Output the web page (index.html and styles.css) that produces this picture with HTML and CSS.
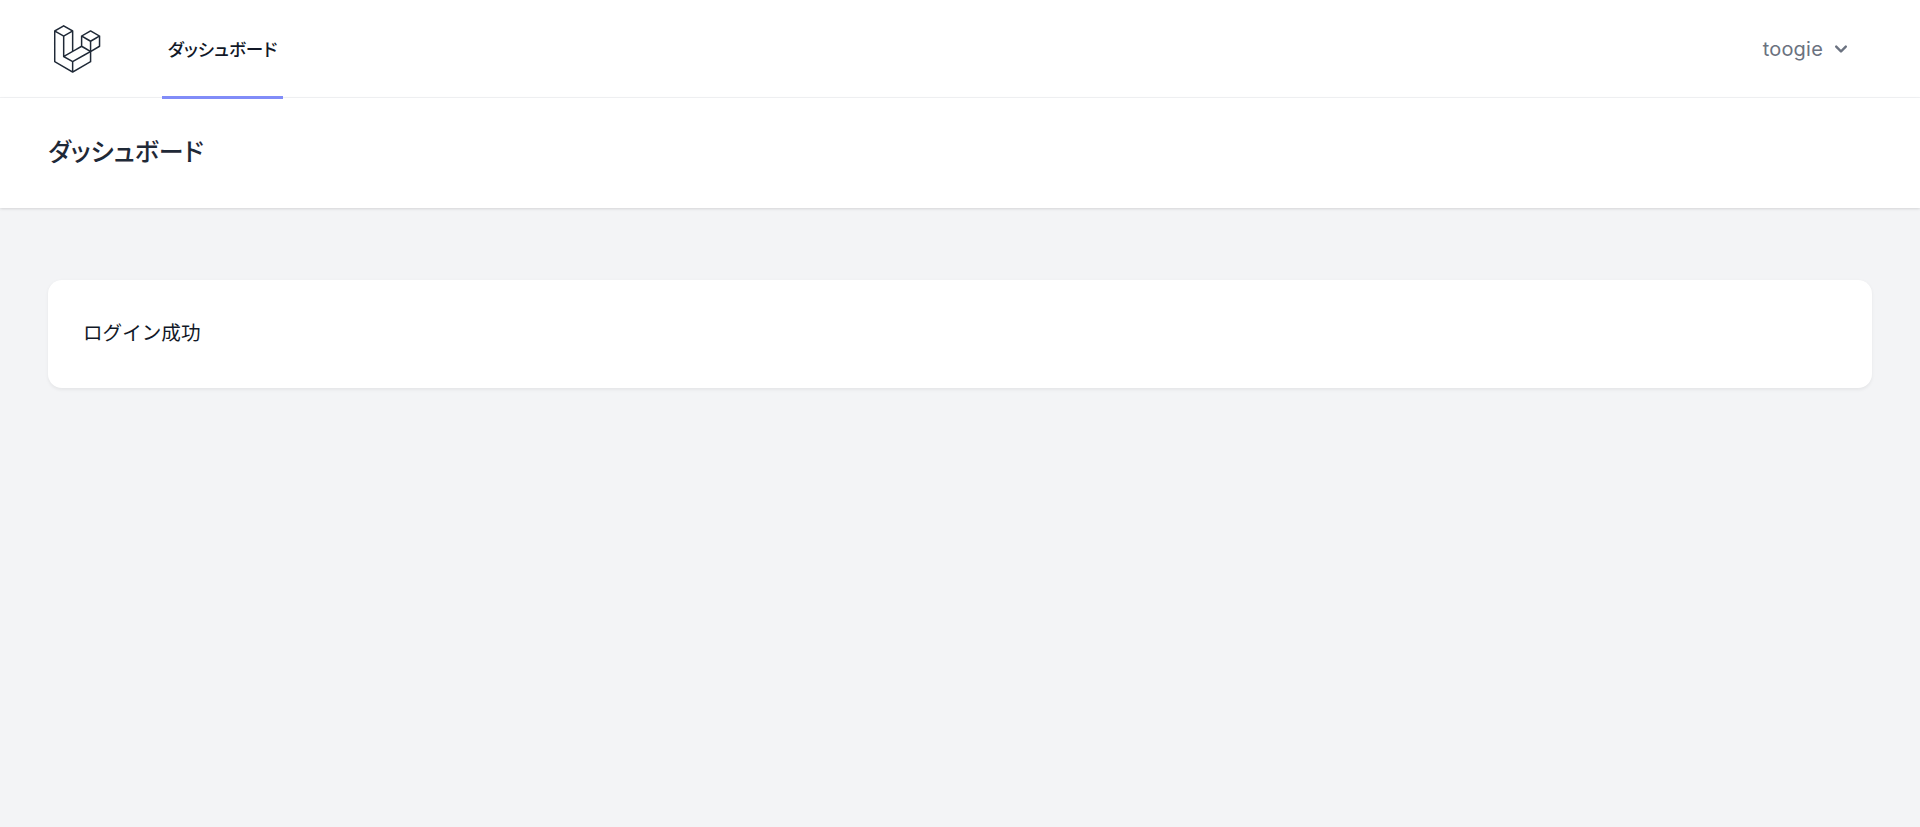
FILE: index.html
```html
<!DOCTYPE html>
<html lang="ja">
<head>
    <meta charset="UTF-8">
    <meta name="viewport" content="width=device-width, initial-scale=1.0">
    <title>ダッシュボード</title>
    <link rel="stylesheet" href="styles.css">
</head>
<body>
    <nav class="navbar">
        <div class="nav-left">
            <a href="#" class="logo">
                <svg class="logo-icon" viewBox="0 0 316 316" xmlns="http://www.w3.org/2000/svg">
                    <path d="M305.8 81.125C305.77 80.995 305.69 80.885 305.65 80.755C305.56 80.525 305.49 80.285 305.37 80.075C305.29 79.935 305.17 79.815 305.07 79.685C304.94 79.515 304.83 79.325 304.68 79.175C304.55 79.045 304.39 78.955 304.25 78.845C304.09 78.715 303.95 78.575 303.77 78.475L251.32 48.275C249.97 47.495 248.31 47.495 246.96 48.275L194.51 78.475C194.33 78.575 194.19 78.725 194.03 78.845C193.89 78.955 193.73 79.045 193.6 79.175C193.45 79.325 193.34 79.515 193.21 79.685C193.11 79.815 192.99 79.935 192.91 80.075C192.79 80.285 192.71 80.525 192.63 80.755C192.58 80.875 192.51 80.995 192.48 81.125C192.38 81.495 192.33 81.875 192.33 82.265V139.625L148.62 164.795V52.575C148.62 52.185 148.57 51.805 148.47 51.435C148.44 51.305 148.36 51.195 148.32 51.065C148.23 50.835 148.16 50.595 148.04 50.385C147.96 50.245 147.84 50.125 147.74 49.995C147.61 49.825 147.5 49.635 147.35 49.485C147.22 49.355 147.06 49.265 146.92 49.155C146.76 49.025 146.62 48.885 146.44 48.785L93.99 18.585C92.64 17.805 90.98 17.805 89.63 18.585L37.18 48.785C37 48.885 36.86 49.035 36.7 49.155C36.56 49.265 36.4 49.355 36.27 49.485C36.12 49.635 36.01 49.825 35.88 49.995C35.78 50.125 35.66 50.245 35.58 50.385C35.46 50.595 35.38 50.835 35.3 51.065C35.25 51.185 35.18 51.305 35.15 51.435C35.05 51.805 35 52.185 35 52.575V232.235C35 233.795 35.84 235.245 37.19 236.025L142.1 296.425C142.33 296.555 142.58 296.635 142.82 296.725C142.93 296.765 143.04 296.835 143.16 296.865C143.53 296.965 143.9 297.015 144.28 297.015C144.66 297.015 145.03 296.965 145.4 296.865C145.5 296.835 145.59 296.775 145.69 296.745C145.95 296.655 146.21 296.565 146.45 296.435L251.36 236.035C252.72 235.255 253.55 233.815 253.55 232.245V174.885L303.81 145.945C305.17 145.165 306 143.725 306 142.155V82.265C305.95 81.875 305.89 81.495 305.8 81.125ZM144.2 227.205L100.57 202.515L146.39 176.135L196.66 147.195L240.33 172.335L208.29 190.625L144.2 227.205ZM244.75 114.995V164.795L226.39 154.225L201.03 139.625V89.825L219.39 100.395L244.75 114.995ZM249.12 57.105L292.81 82.265L249.12 107.425L205.43 82.265L249.12 57.105ZM114.49 184.425L96.13 194.995V85.305L121.49 70.705L139.85 60.135V169.815L114.49 184.425ZM91.76 27.425L135.45 52.585L91.76 77.745L48.07 52.585L91.76 27.425ZM43.67 60.135L62.03 70.705L87.39 85.305V202.545V202.555V202.565C87.39 202.735 87.44 202.895 87.46 203.055C87.49 203.265 87.49 203.485 87.55 203.695V203.705C87.6 203.875 87.69 204.035 87.76 204.195C87.84 204.375 87.89 204.575 87.99 204.745C87.99 204.745 87.99 204.755 88 204.755C88.09 204.905 88.22 205.035 88.33 205.175C88.45 205.335 88.55 205.495 88.69 205.635L88.7 205.645C88.82 205.765 88.98 205.855 89.12 205.965C89.28 206.085 89.42 206.225 89.59 206.325C89.6 206.325 89.6 206.325 89.61 206.335C89.62 206.335 89.62 206.345 89.63 206.345L139.87 234.775V285.065L43.67 229.705V60.135ZM244.75 229.705L148.58 285.075V234.775L219.8 194.115L244.75 179.875V229.705ZM297.2 139.625L253.49 164.795V114.995L278.85 100.395L297.21 89.825V139.625H297.2Z"/>
                </svg>
            </a>
            <a href="#" class="nav-link">ダッシュボード</a>
        </div>
        <button class="user-menu">
            <span>toogie</span>
            <svg class="chevron" viewBox="0 0 20 20" xmlns="http://www.w3.org/2000/svg">
                <path fill-rule="evenodd" clip-rule="evenodd" d="M5.293 7.293a1 1 0 011.414 0L10 10.586l3.293-3.293a1 1 0 111.414 1.414l-4 4a1 1 0 01-1.414 0l-4-4a1 1 0 010-1.414z"/>
            </svg>
        </button>
    </nav>

    <header class="page-header">
        <h1>ダッシュボード</h1>
    </header>

    <main class="content">
        <div class="card">ログイン成功</div>
    </main>
</body>
</html>
```

FILE: styles.css
```css
body {
    margin: 0;
    min-height: 827px;
    background-color: #f3f4f6;
    color: #111827;
    font-family: "Noto Sans CJK JP", "Noto Sans", sans-serif;
}
.navbar {
    display: flex;
    justify-content: space-between;
    height: 97px;
    padding: 0 48px;
    background: #fff;
    border-bottom: 1px solid #f3f4f6;
}
.nav-left {
    display: flex;
}
.logo {
    display: flex;
    align-items: center;
    margin-right: 60px;
}
.logo-icon {
    display: block;
    width: 54px;
    height: 54px;
    fill: #1f2937;
}
.nav-link {
    display: flex;
    align-items: center;
    justify-content: center;
    box-sizing: border-box;
    width: 121px;
    height: 99px;
    border-bottom: 3px solid #818cf8;
    color: #111827;
    font-size: 17.6px;
    font-weight: 500;
    font-feature-settings: "palt";
    text-decoration: none;
}
.user-menu {
    display: flex;
    align-items: center;
    gap: 6px;
    margin-right: 19px;
    padding: 0;
    border: none;
    background: none;
    color: #6b7280;
    font-family: "Inter", sans-serif;
    font-size: 20px;
    letter-spacing: 0.2px;
}
.chevron {
    width: 24px;
    height: 24px;
    fill: currentColor;
}
.page-header {
    padding: 26px 48px 31px;
    background: #fff;
    box-shadow: 0 1.2px 3.6px rgba(0, 0, 0, 0.1), 0 1.2px 2.4px rgba(0, 0, 0, 0.06);
}
.page-header h1 {
    margin: 0;
    color: #1f2937;
    font-size: 25px;
    font-weight: 500;
    font-feature-settings: "palt";
    line-height: 53px;
}
.content {
    padding: 72px 48px;
}
.card {
    padding: 34px 35px 38px;
    background: #fff;
    border-radius: 14px;
    box-shadow: 0 1.2px 3.6px rgba(0, 0, 0, 0.06);
    color: #111827;
    font-size: 19.6px;
    line-height: 36px;
}
```
